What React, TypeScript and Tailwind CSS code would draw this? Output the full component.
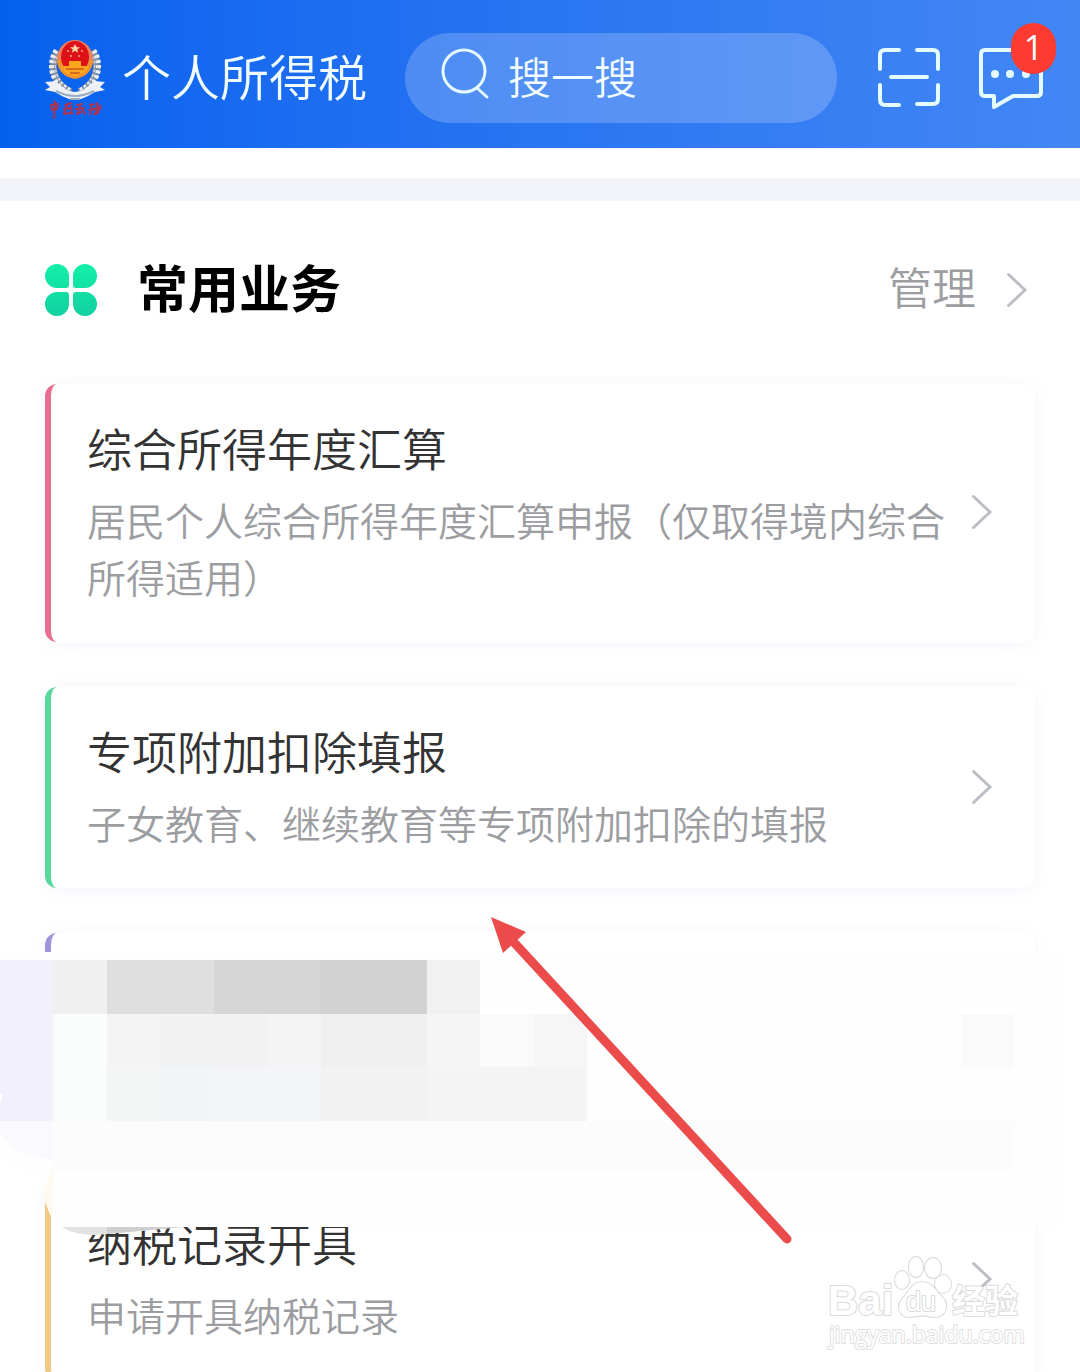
import type { ReactNode } from 'react'

type Service = {
  title: string
  desc: string
  accent: string
}

const services: Service[] = [
  {
    title: '综合所得年度汇算',
    desc: '居民个人综合所得年度汇算申报（仅取得境内综合所得适用）',
    accent: 'border-[#e5708f]',
  },
  {
    title: '专项附加扣除填报',
    desc: '子女教育、继续教育等专项附加扣除的填报',
    accent: 'border-[#5ad79b]',
  },
  { title: '', desc: '', accent: 'border-[#a294dc]' },
  {
    title: '纳税记录开具',
    desc: '申请开具纳税记录',
    accent: 'border-[#f0c987]',
  },
]

function Chevron() {
  return (
    <svg className="h-9 w-[22px] shrink-0" viewBox="0 0 22 36" fill="none" stroke="#bcbec6" strokeWidth="3" strokeLinecap="round">
      <path d="M2.500 2.500L19 18L2.500 33.500" />
    </svg>
  )
}

function Emblem() {
  return (
    <svg className="h-[84px] w-[62px] shrink-0" viewBox="0 0 62 84">
      <g fill="none" stroke="#7f8b9f" strokeWidth="7">
        <path d="M14 15C5 28 9 48 27 56" />
        <path d="M48 15C57 28 53 48 35 56" />
      </g>
      <g fill="none" stroke="#e9edf3" strokeWidth="7" strokeDasharray="3 2">
        <path d="M13 15C4 28 8 48 27 56" />
        <path d="M49 15C58 28 54 48 35 56" />
      </g>
      <g fill="none" stroke="#8f99aa" strokeWidth="1">
        <path d="M14 17C7 29 10 47 27 56" />
        <path d="M48 17C55 29 52 47 35 56" />
      </g>
      <path d="M1 46L12 45Q20 55 31 56Q42 55 50 45L61 46L56 51L61 54L51 56Q45 60 37 63H25Q17 60 11 56L1 54L6 51Z" fill="#eef2f7" />
      <path d="M12 55Q22 60 31 60Q40 60 50 55M26 63H36" fill="none" stroke="#9aabc2" strokeWidth="2" />
      <ellipse cx="31" cy="23" rx="18" ry="19" fill="#ee7f5c" />
      <path d="M13 24Q14 40 31 43Q48 40 49 24Z" fill="#f2932b" />
      <ellipse cx="31" cy="21" rx="14" ry="16" fill="#dc1218" />
      <path d="M31 8l1.500 3.200h3.500l-2.800 2.200 1 3.400-3.200-2-3.200 2 1-3.400-2.800-2.200h3.500z" fill="#ffd9a8" />
      <g fill="#f8a878">
        <circle cx="24" cy="15" r="1" />
        <circle cx="38" cy="15" r="1" />
        <circle cx="27" cy="20" r="1" />
        <circle cx="35" cy="20" r="1" />
      </g>
      <path d="M17 30H25V25H37V30H45Q43 38 31 40Q19 38 17 30Z" fill="#fba61c" />
      <path d="M22 33H40M26 37H36" stroke="#dc6a1c" strokeWidth="2" />
      <g fill="none" stroke="#b03350" strokeWidth="2" strokeLinecap="round" strokeLinejoin="round">
        <path d="M7 69L14 68L13 73L8 74L7 69M11 65L10 82" />
        <path d="M21 69L27 67M20 73L28 72M23 69L20 78L26 77M27 70L28 78" />
        <path d="M33 69L38 68M32 73L40 72M36 70L33 78L37 76M38 73L41 78" />
        <path d="M46 69L50 68M45 74L57 72M48 69L46 78M53 67L52 78M56 69L54 77L50 78" />
      </g>
    </svg>
  )
}

function Cell({ x, y, w, h = 54, fill }: { x: number; y: number; w: number; h?: number; fill: string }) {
  return <rect x={x} y={y} width={w} height={h} fill={fill} />
}

// Pixelated cover over the third card
function Mosaic() {
  return (
    <svg className="absolute top-[19px] left-0 h-[285px] w-[1080px] max-w-none" viewBox="0 952 1080 285" shapeRendering="crispEdges">
      <path d="M0 952H1060V1227H180L95 1235Q70 1235 58 1227L51 1216Q44 1204 45 1179L0 1160Z" fill="#fefefe" />
      <Cell x={0} y={960} w={53} h={161} fill="#f2f0fc" />
      <path d="M0 1121H53V1159Q16 1159 0 1132Z" fill="#f9f9fe" />
      <path d="M0 1094Q5 1094 0 1103Z" fill="#fff" />
      <Cell x={53} y={960} w={54} fill="#f0f0f0" />
      <Cell x={107} y={960} w={107} fill="#dedede" />
      <Cell x={214} y={960} w={107} fill="#d5d5d5" />
      <Cell x={321} y={960} w={106} fill="#d2d2d2" />
      <Cell x={427} y={960} w={53} fill="#f1f1f1" />
      <Cell x={53} y={1014} w={54} h={107} fill="#fbfdfc" />
      <Cell x={107} y={1014} w={53} fill="#f4f4f4" />
      <Cell x={160} y={1014} w={107} fill="#f2f2f2" />
      <Cell x={267} y={1014} w={54} fill="#f4f4f4" />
      <Cell x={321} y={1014} w={106} fill="#f0f0f0" />
      <Cell x={427} y={1014} w={53} fill="#f5f5f5" />
      <Cell x={480} y={1014} w={54} fill="#fafafa" />
      <Cell x={534} y={1014} w={53} fill="#f6f6f6" />
      <Cell x={107} y={1067} w={53} fill="#f4f5f5" />
      <Cell x={160} y={1067} w={54} fill="#f2f5f8" />
      <Cell x={214} y={1067} w={107} fill="#f4f5f9" />
      <Cell x={321} y={1067} w={106} fill="#f2f2f2" />
      <Cell x={427} y={1067} w={160} fill="#f4f4f4" />
      <Cell x={961} y={1014} w={53} fill="#fafafa" />
      <Cell x={53} y={1121} w={961} h={50} fill="#fcfcfc" />
      <path d="M53 1168Q43 1190 45 1202L51 1216L53 1216Z" fill="#fefaee" shapeRendering="auto" />
      <path d="M62 1227H182L95 1235Q72 1234 62 1227Z" fill="#e2e2e2" shapeRendering="auto" />
      <path d="M107 1227H182L107 1234Z" fill="#cfcfcf" shapeRendering="auto" />
    </svg>
  )
}

function Arrow() {
  return (
    <svg className="absolute -top-1 left-[480px] h-[350px] w-[320px]" viewBox="480 909 320 350">
      <path d="M510 938L787 1239" stroke="#ec4b4b" strokeWidth="9" strokeLinecap="round" />
      <path d="M491 917L526 932L503 953Z" fill="#ec4b4b" />
    </svg>
  )
}

function Watermark() {
  return (
    <svg className="absolute right-11 bottom-4 h-[104px] w-[216px]" viewBox="820 1252 216 104">
      <g fill="#fff" stroke="#d9d9d9" strokeWidth="2" strokeLinejoin="round" paintOrder="stroke">
        <ellipse cx="902" cy="1280" rx="7" ry="9" />
        <ellipse cx="916" cy="1267" rx="7" ry="10" />
        <ellipse cx="933" cy="1268" rx="8" ry="10" />
        <ellipse cx="943" cy="1284" rx="8" ry="9" />
        <path d="M922 1282C932 1282 935 1290 942 1297C950 1305 946 1318 933 1317C926 1315 918 1315 911 1317C898 1318 896 1305 903 1298C910 1291 912 1282 922 1282Z" />
        <text x="828" y="1315" fontSize="42" fontWeight="700" fontFamily="Liberation Sans, sans-serif">Bai</text>
        <text x="952" y="1313" fontSize="33" fontWeight="700" fontFamily="Noto Sans CJK SC, sans-serif">经验</text>
        <text x="829" y="1343" fontSize="23" fontWeight="400" fontFamily="Open Sans, sans-serif" stroke="#e0e0e0">jingyan.baidu.com</text>
        <text x="906" y="1311" fontSize="27" fontWeight="400" fontFamily="Liberation Sans, sans-serif">du</text>
      </g>
    </svg>
  )
}

function IconButton({ label, children }: { label: string; children: ReactNode }) {
  return (
    <button type="button" aria-label={label} className="relative shrink-0">
      {children}
    </button>
  )
}

function Header() {
  return (
    <header className="flex h-[148px] shrink-0 items-center bg-linear-to-r from-[#0361ee] to-[#4387f5] pt-2 pr-9 pl-11 text-[#f0fcff]">
      <Emblem />
      <h1 className="ml-4 shrink-0 pb-2 text-[49px] leading-none">个人所得税</h1>
      <label className="ml-[38px] flex h-[90px] min-w-0 flex-1 items-center rounded-full bg-white/20 pl-9">
        <svg className="mb-2 h-[52px] w-[52px] shrink-0" viewBox="0 0 52 52" fill="none" stroke="#e4fbff" strokeWidth="3" strokeLinecap="round">
          <circle cx="23" cy="23" r="21" />
          <path d="M36 40L46 49" />
        </svg>
        <input
          type="search"
          aria-label="搜一搜"
          placeholder="搜一搜"
          className="ml-[15px] w-full min-w-0 bg-transparent pb-1.5 text-[43px] leading-[60px] outline-none placeholder:text-[#f0fcff]"
        />
      </label>
      <div className="ml-10 flex gap-[37px]">
        <IconButton label="扫一扫">
          <svg className="h-[62px] w-16" viewBox="0 0 64 62" fill="none" stroke="#e4fbff" strokeWidth="4" strokeLinecap="round">
            <path d="M22 3H8Q3 3 3 8V22M40 3H56Q61 3 61 8V22M3 38V52Q3 58 8 58H22M61 38V52Q61 57 56 57H40M14 30H50" />
          </svg>
        </IconButton>
        <IconButton label="消息">
          <svg className="h-[62px] w-[66px]" viewBox="0 0 66 62" fill="none" stroke="#e4fbff" strokeWidth="4" strokeLinejoin="round">
            <path d="M7 3H59Q63 3 63 7V45Q63 49 59 49H35L16 60V49H7Q3 49 3 45V7Q3 3 7 3Z" />
            <g fill="#e4fbff" stroke="none">
              <circle cx="17" cy="27" r="4" />
              <circle cx="32" cy="27" r="4" />
              <circle cx="48" cy="27" r="4" />
            </g>
          </svg>
          <span className="absolute -top-6 -right-3 flex h-[51px] w-[45px] items-center justify-center rounded-full bg-[#fd3b31] pb-1 font-['Open_Sans',sans-serif] text-[34px] leading-none font-normal">1</span>
        </IconButton>
      </div>
    </header>
  )
}

function ServiceCard({ title, desc, accent }: Service) {
  return (
    <a href="#" className={`flex min-h-[201px] items-center rounded-xl border-l-[6px] bg-white pr-[42px] pl-9 shadow-[0_2px_16px_rgba(90,120,190,0.07)] ${accent}`}>
      <div className="min-w-0 flex-1 pt-[34px] pb-[37px]">
        <h3 className="text-[45px] leading-[60px] text-[#333]">{title}</h3>
        <p className="mt-[13px] text-[39px] leading-[57px] text-[#9b9da1]">{desc}</p>
      </div>
      <div className="ml-5 pb-0.5">{title && <Chevron />}</div>
    </a>
  )
}

export default function App() {
  return (
    <div className="flex h-screen flex-col overflow-hidden bg-white font-['Noto_Sans_CJK_SC',sans-serif] font-[350]">
      <Header />
      <main className="relative min-h-0 flex-1 overflow-hidden">
        <div className="mt-[30px] h-[23px] bg-[#f3f4f9]" />
        <section>
          <div className="flex h-[183px] items-center justify-between pr-[52px] pb-1.5 pl-[45px]">
            <div className="flex items-center gap-10">
              <svg className="h-[52px] w-[52px]" viewBox="0 0 52 52">
                <defs>
                  <linearGradient id="leaf" gradientUnits="userSpaceOnUse" x1="0" y1="0" x2="0" y2="52">
                    <stop offset="0" stopColor="#13f0a8" />
                    <stop offset="1" stopColor="#12d0a0" />
                  </linearGradient>
                </defs>
                <path
                  fill="url(#leaf)"
                  d="M12 0A12 12 0 0 1 24 12V21Q24 24 21 24H12A12 12 0 0 1 12 0ZM40 0A12 12 0 0 1 40 24H31Q28 24 28 21V12A12 12 0 0 1 40 0ZM12 28H21Q24 28 24 31V40A12 12 0 1 1 12 28ZM31 28H40A12 12 0 1 1 28 40V31Q28 28 31 28Z"
                />
              </svg>
              <h2 className="pb-1.5 text-[51px] leading-none font-bold text-black">常用业务</h2>
            </div>
            <button type="button" className="flex items-center gap-[30px] text-[44px] leading-none text-[#9b9da1]">
              <span className="pb-2">管理</span>
              <Chevron />
            </button>
          </div>
          <div className="flex flex-col gap-[45px] px-[45px]">
            {services.slice(0, 2).map((s) => (
              <ServiceCard key={s.title} {...s} />
            ))}
          </div>
          <div className="relative mt-[45px]">
            <div className="flex flex-col gap-[45px] px-[45px]">
              {services.slice(2).map((s) => (
                <ServiceCard key={s.accent} {...s} />
              ))}
            </div>
            <Mosaic />
            <div className="absolute -top-5 left-0">
              <Arrow />
            </div>
          </div>
        </section>
        <Watermark />
      </main>
    </div>
  )
}
